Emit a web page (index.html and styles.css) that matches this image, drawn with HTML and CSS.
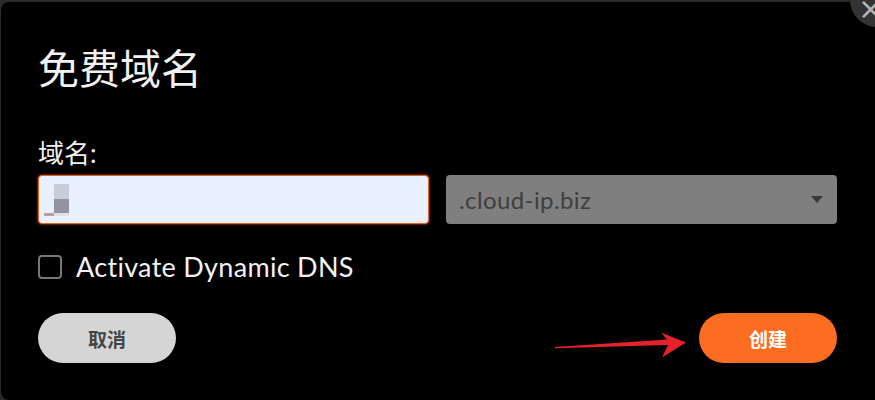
FILE: index.html
```html
<!DOCTYPE html>
<html lang="zh">
<head>
<meta charset="utf-8">
<title>免费域名</title>
<link rel="stylesheet" href="styles.css">
</head>
<body>
<div class="dialog">
  <button class="close" aria-label="关闭">&times;</button>
  <h1 class="title">免费域名</h1>
  <label class="label">域名:</label>
  <div class="row">
    <div class="input">
      <span class="px px-a"></span>
      <span class="px px-b"></span>
      <span class="px px-c"></span>
      <span class="px px-d"></span>
    </div>
    <div class="select">
      <span class="select-text">.cloud-ip.biz</span>
      <span class="caret"></span>
    </div>
  </div>
  <div class="check-row">
    <span class="checkbox"></span>
    <span class="check-label">Activate Dynamic DNS</span>
  </div>
  <div class="actions">
    <button class="btn btn-cancel">取消</button>
    <button class="btn btn-create">创建</button>
  </div>
  <svg class="arrow" width="875" height="400" viewBox="0 0 875 400">
    <path d="M555,347 L667,339.5 L661,332.5 L686,342.5 L662,357.5 L668,345 L555,348.2 Z" fill="#e5212b"/>
  </svg>
</div>
</body>
</html>
```
FILE: styles.css
```css
html, body {
  margin: 0;
  padding: 0;
}
body {
  background: #2a2a2a;
  width: 875px;
  height: 400px;
  overflow: hidden;
}
.dialog {
  position: relative;
  box-sizing: border-box;
  margin: 2px 0 0 1px;
  width: 900px;
  height: 398px;
  background: #000;
  border-radius: 8px;
  padding: 32px 0 0 37px;
}
.close {
  position: absolute;
  left: 849px;
  top: -29px;
  width: 54px;
  height: 54px;
  border-radius: 50%;
  border: none;
  background: #333;
  color: #b5b5b5;
  font-family: "DejaVu Sans", sans-serif;
  font-size: 30px;
  line-height: 1;
  padding: 18px 0 0 8px;
  text-align: left;
}
.title {
  margin: 0;
  font-family: "Noto Sans CJK SC", sans-serif;
  font-weight: 400;
  font-size: 41px;
  line-height: 64px;
  color: #f2f2f2;
}
.label {
  display: block;
  margin-top: 39px;
  font-family: "Lato", "Noto Sans CJK SC", sans-serif;
  font-size: 26px;
  line-height: 32px;
  color: #f0f0f0;
}
.row {
  display: flex;
  gap: 17px;
  width: 799px;
  margin-top: 6px;
}
.input {
  position: relative;
  box-sizing: border-box;
  width: 391px;
  height: 49px;
  background: #e8effd;
  border: 1px solid #d8651f;
  border-radius: 4px;
  box-shadow: 0 0 2px 1px #6b2208;
}
.px { position: absolute; }
.px-a { left: 15px; top: 8px; width: 15px; height: 15px; background: #c9cdd8; }
.px-b { left: 15px; top: 23px; width: 15px; height: 14px; background: #9294a2; }
.px-c { left: 5px; top: 37px; width: 10px; height: 3px; background: #b79ea6; }
.px-d { left: 15px; top: 37px; width: 15px; height: 3px; background: #dde0ea; }
.select {
  box-sizing: border-box;
  width: 391px;
  height: 49px;
  background: #7f7f7f;
  border-radius: 4px;
  display: flex;
  align-items: center;
  justify-content: space-between;
  padding: 0 14px 0 13px;
}
.select-text {
  font-family: "Lato", sans-serif;
  font-size: 24px;
  letter-spacing: 0.4px;
  color: #3e3e3e;
}
.caret {
  width: 0;
  height: 0;
  border-left: 6.5px solid transparent;
  border-right: 6.5px solid transparent;
  border-top: 7px solid #3a3a3a;
}
.check-row {
  display: flex;
  align-items: center;
  gap: 14px;
  margin-top: 27px;
}
.checkbox {
  box-sizing: border-box;
  width: 24px;
  height: 24px;
  border: 2px solid #777;
  border-radius: 4px;
}
.check-label {
  font-family: "Lato", sans-serif;
  font-size: 27px;
  letter-spacing: 0.3px;
  line-height: 32px;
  color: #f2f2f2;
}
.actions {
  display: flex;
  justify-content: space-between;
  width: 799px;
  margin-top: 30px;
}
.btn {
  width: 138px;
  height: 50px;
  border: none;
  border-radius: 25px;
  font-family: "Noto Sans CJK SC", sans-serif;
  font-weight: 700;
  font-size: 19px;
  padding: 0;
}
.btn-cancel {
  background: #d5d5d5;
  color: #454545;
}
.btn-create {
  background: #fc6d21;
  color: #fff;
}
.arrow {
  position: absolute;
  left: -1px;
  top: -2px;
  pointer-events: none;
}
```
